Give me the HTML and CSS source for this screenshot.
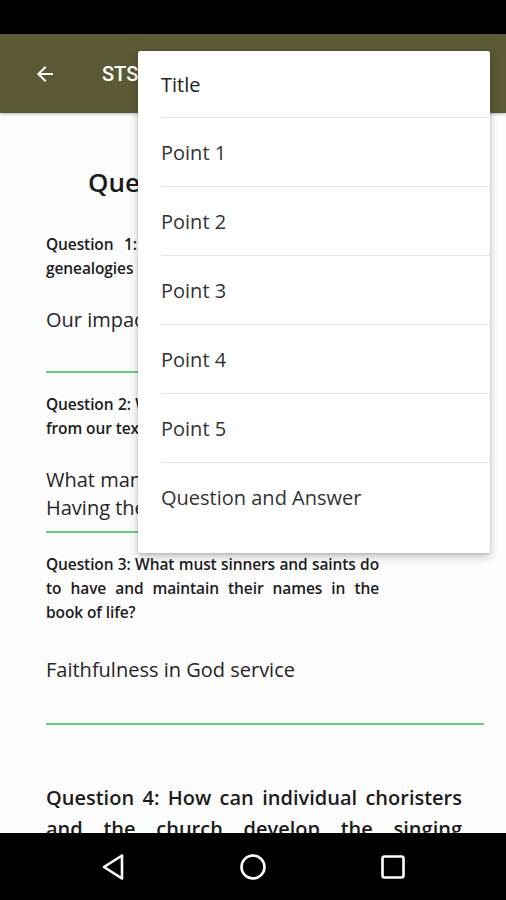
FILE: index.html
```html
<!DOCTYPE html>
<html lang="en">
<head>
<meta charset="UTF-8" />
<title>STS Question and Answer</title>
<link rel="stylesheet" href="styles.css">
</head>
<body>
  <div class="phone">
    <div class="status-bar"></div>

    <header class="app-bar">
      <svg class="back" width="24" height="24" viewBox="0 0 24 24">
        <path d="M20 11H7.83l5.59-5.59L12 4l-8 8 8 8 1.41-1.41L7.83 13H20v-2z" fill="#fff"/>
      </svg>
      <span class="app-title">STS Lesson 1</span>
    </header>

    <main class="content">
      <h1 class="heading">Questions and Answers</h1>

      <p class="question">Question 1: What do we learn from the genealogies recorded in our text?</p>
      <div class="answer">Our impact on generations</div>
      <hr class="rule">

      <p class="question">Question 2: What lessons can we learn today from our text about names?</p>
      <div class="answer">What many people are remembered for.<br>Having their names in the book</div>
      <hr class="rule">

      <p class="question">Question 3: What must sinners and saints do to have and maintain their names in the book of life?</p>
      <div class="answer spaced">Faithfulness in God service</div>
      <hr class="rule">

      <p class="question large">Question 4: How can individual choristers and the church develop the singing ministry?</p>
    </main>

    <nav class="nav-bar">
      <svg width="26" height="28" viewBox="0 0 26 28">
        <path d="M22 2.5 L4 14 L22 25.5 Z" fill="none" stroke="#fff" stroke-width="2.6" stroke-linejoin="round"/>
      </svg>
      <svg width="28" height="28" viewBox="0 0 28 28">
        <circle cx="14" cy="14" r="11.5" fill="none" stroke="#fff" stroke-width="2.6"/>
      </svg>
      <svg width="26" height="26" viewBox="0 0 26 26">
        <rect x="2.5" y="2.5" width="21" height="21" rx="2" fill="none" stroke="#fff" stroke-width="2.6"/>
      </svg>
    </nav>

    <!-- overflow menu opened over the page -->
    <ul class="menu">
      <li class="menu-item first">Title</li>
      <li class="menu-item">Point 1</li>
      <li class="menu-item">Point 2</li>
      <li class="menu-item">Point 3</li>
      <li class="menu-item">Point 4</li>
      <li class="menu-item">Point 5</li>
      <li class="menu-item">Question and Answer</li>
    </ul>
  </div>
</body>
</html>
```

FILE: styles.css
```css
body {
  margin: 0;
  font-family: "Open Sans", "Noto Sans", sans-serif;
  background: #fdfdfd;
}

.phone {
  position: relative;
  width: 506px;
  height: 900px;
  display: flex;
  flex-direction: column;
  overflow: hidden;
  background: #fdfdfd;
}

.status-bar {
  height: 34px;
  background: #000;
  flex: none;
}

.app-bar {
  height: 79px;
  flex: none;
  background: #5c5a35;
  display: flex;
  align-items: center;
  padding-left: 33px;
  gap: 45px;
  box-shadow: 0 1px 3px rgba(0, 0, 0, 0.3);
  position: relative;
  z-index: 1;
}

.back {
  margin-top: 1px;
}

.app-title {
  color: #fff;
  font-family: Roboto, "Noto Sans", sans-serif;
  font-size: 20px;
  font-weight: 500;
}

.content {
  flex: 1;
  overflow: hidden;
  padding: 52px 22px 0 46px;
  color: #1c1c1c;
}

.heading {
  margin: 0;
  font-size: 26px;
  line-height: 34px;
  font-weight: 600;
  padding-left: 42px;
  white-space: nowrap;
}

.question {
  width: 333px;
  margin: 19px 0 0;
  font-size: 15.5px;
  line-height: 24px;
  font-weight: 600;
  text-align: justify;
  letter-spacing: -0.1px;
}

.heading + .question {
  margin-top: 33px;
}

.answer {
  min-height: 65px;
  padding-top: 26px;
  font-size: 20px;
  line-height: 28px;
  color: #262626;
}

.answer.spaced {
  padding-top: 32px;
  min-height: 67px;
}

.rule {
  margin: 0;
  border: none;
  height: 2px;
  background: #5ad46e;
}

.question.large {
  width: 416px;
  margin-top: 57px;
  font-size: 20px;
  line-height: 31px;
  letter-spacing: 0;
}

.nav-bar {
  height: 67px;
  flex: none;
  background: #000;
  display: flex;
  align-items: center;
  gap: 113px;
  padding-left: 100px;
}

.menu {
  position: absolute;
  top: 51px;
  left: 138px;
  width: 352px;
  margin: 0;
  padding: 0 0 22px;
  list-style: none;
  background: #fff;
  border-radius: 2px;
  box-shadow: 0 4px 10px rgba(0, 0, 0, 0.22), 0 1px 3px rgba(0, 0, 0, 0.15);
  z-index: 5;
}

.menu-item {
  height: 68px;
  margin-left: 23px;
  display: flex;
  align-items: center;
  border-top: 1px solid #e6e6e6;
  font-size: 20px;
  color: #333;
}

.menu-item.first {
  height: 66px;
  border-top: none;
  color: #222;
}
```
